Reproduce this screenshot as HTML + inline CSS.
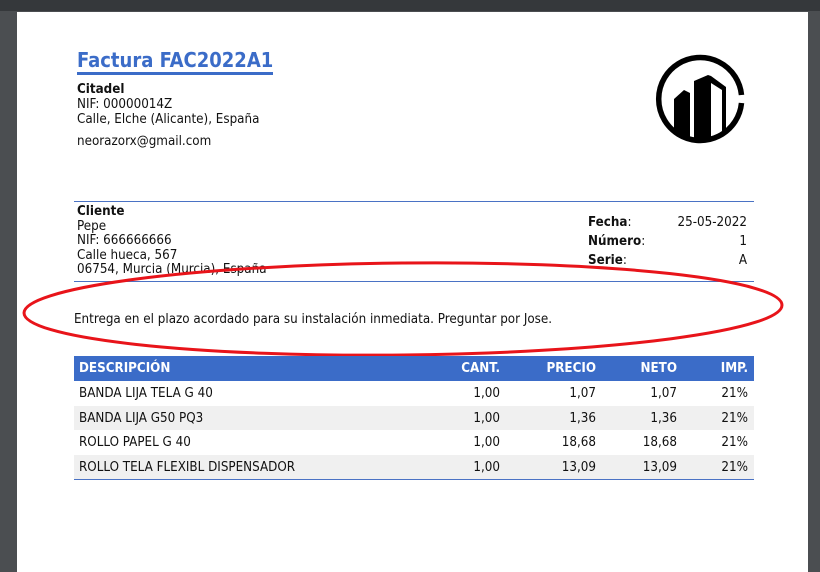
<!DOCTYPE html>
<html><head><meta charset="utf-8"><style>
*{margin:0;padding:0;box-sizing:border-box}
body{width:820px;height:561px;overflow:hidden;background:#4b4e51;position:relative;font-family:"DejaVu Sans Condensed","DejaVu Sans","Liberation Sans",sans-serif;font-stretch:condensed;font-size:13.3px;color:#111}
.top{position:absolute;left:0;top:0;width:820px;height:11px;background:#35383b}
.page{position:absolute;left:17px;top:12px;width:791px;height:560px;background:#fff}
.a{position:absolute;white-space:nowrap}
b{font-weight:bold}
.r{text-align:right}
table{position:absolute;left:74px;top:356px;width:680px;border-collapse:collapse;font-size:13.3px;table-layout:fixed}
th{background:#3b6cc8;color:#fff;height:25px;text-align:right;font-weight:bold;padding:0 6px}
td{height:24.5px;padding:1px 6px 0;text-align:right}
tbody tr:nth-child(even) td{background:#f0f0f0}
th:first-child,td:first-child{text-align:left;padding-left:5px}
tbody tr:last-child td{border-bottom:1px solid #4a72c4}
</style></head><body>
<div class="top"></div>
<div class="page"></div>
<div class="a" style="left:77px;top:48px;font-size:20px;font-weight:bold;color:#3b6cc8;border-bottom:3px solid #3b6cc8;line-height:24px">Factura FAC2022A1</div>
<div class="a" style="left:77px;top:82px;line-height:15px"><b>Citadel</b><br>NIF: 00000014Z<br>Calle, Elche (Alicante), España</div>
<div class="a" style="left:77px;top:134px">neorazorx@gmail.com</div>
<svg class="a" style="left:650px;top:49px" width="100" height="100" viewBox="650 49 100 100">
<defs><clipPath id="c"><circle cx="700" cy="99" r="40"/></clipPath></defs>
<path d="M741.5 95 A41.5 41.5 0 1 0 741.5 103" fill="none" stroke="#000" stroke-width="5.5"/>
<g clip-path="url(#c)">
<path d="M674 150 L674 99 L684 90 L690 93 L690 150 Z" fill="#000"/>
<path d="M694 150 L694 81 L708 75 L711 76 L711 150 Z" fill="#000"/>
<path d="M711 76 L726 87 L726 150 L722 150 L722 90 L711 83 Z" fill="#000"/>
</g>
</svg>
<div class="a" style="left:74px;top:201px;width:680px;border-top:1px solid #4a72c4"></div>
<div class="a" style="left:74px;top:281px;width:680px;border-top:1px solid #4a72c4"></div>
<div class="a" style="left:77px;top:205px;line-height:14.5px"><b>Cliente</b><br>Pepe<br>NIF: 666666666<br>Calle hueca, 567<br>06754, Murcia (Murcia), España</div>
<div class="a" style="left:588px;top:213px;line-height:19px"><b>Fecha</b>:<br><b>Número</b>:<br><b>Serie</b>:</div>
<div class="a r" style="left:650px;top:213px;width:97px;line-height:19px">25-05-2022<br>1<br>A</div>
<div class="a" style="left:74px;top:312px">Entrega en el plazo acordado para su instalación inmediata. Preguntar por Jose.</div>
<svg class="a" style="left:0;top:0" width="820" height="561"><ellipse cx="403" cy="309" rx="379" ry="46" fill="none" stroke="#e8141a" stroke-width="3" transform="rotate(-0.6 403 309)"/></svg>
<table>
<colgroup><col style="width:352px"><col style="width:80px"><col style="width:96px"><col style="width:81px"><col style="width:71px"></colgroup>
<thead><tr><th>DESCRIPCIÓN</th><th>CANT.</th><th>PRECIO</th><th>NETO</th><th>IMP.</th></tr></thead>
<tbody>
<tr><td>BANDA LIJA TELA G 40</td><td>1,00</td><td>1,07</td><td>1,07</td><td>21%</td></tr>
<tr><td>BANDA LIJA G50 PQ3</td><td>1,00</td><td>1,36</td><td>1,36</td><td>21%</td></tr>
<tr><td>ROLLO PAPEL G 40</td><td>1,00</td><td>18,68</td><td>18,68</td><td>21%</td></tr>
<tr><td>ROLLO TELA FLEXIBL DISPENSADOR</td><td>1,00</td><td>13,09</td><td>13,09</td><td>21%</td></tr>
</tbody></table>
</body></html>
